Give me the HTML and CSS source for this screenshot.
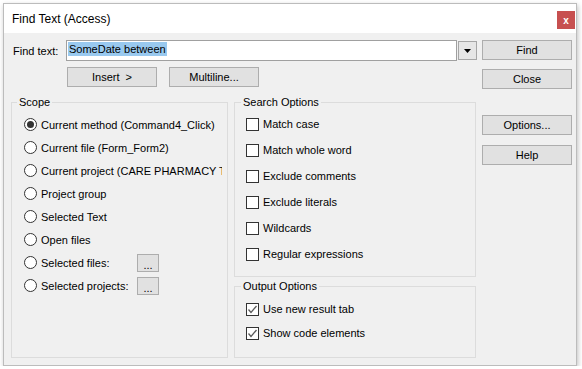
FILE: index.html
```html
<!DOCTYPE html>
<html lang="en">
<head>
  <meta charset="UTF-8"/>
  <title>Find Text (Access)</title>
  <link rel="stylesheet" href="styles.css">
</head>
<body>

  <div class="window">
    <!-- Title bar -->
    <div class="titlebar">
      <span class="title">Find Text (Access)</span>
      <span class="close-x">x</span>
    </div>

    <div class="dialog">
      <div class="main">
        <!-- Find text row -->
        <div class="find-row">
          <label class="find-label">Find text:</label>
          <div class="combo-input"><span class="sel">SomeDate between</span></div>
          <div class="combo-arrow">
            <svg width="7" height="4" viewBox="0 0 7 4"><path d="M0 0H7L3.5 4Z" fill="#000"/></svg>
          </div>
        </div>

        <div class="insert-row">
          <button class="btn">Insert &nbsp;&gt;</button>
          <button class="btn">Multiline...</button>
        </div>

        <div class="groups">
          <!-- Scope -->
          <fieldset class="group scope">
            <legend>Scope</legend>
            <div class="opt-list">
              <div class="opt"><span class="radio on"></span><span>Current method (Command4_Click)</span></div>
              <div class="opt"><span class="radio"></span><span>Current file (Form_Form2)</span></div>
              <div class="opt"><span class="radio"></span><span>Current project (CARE PHARMACY TRADING)</span></div>
              <div class="opt"><span class="radio"></span><span>Project group</span></div>
              <div class="opt"><span class="radio"></span><span>Selected Text</span></div>
              <div class="opt"><span class="radio"></span><span>Open files</span></div>
              <div class="opt"><span class="radio"></span><span class="opt-fixed">Selected files:</span><button class="btn btn-dots">...</button></div>
              <div class="opt"><span class="radio"></span><span class="opt-fixed">Selected projects:</span><button class="btn btn-dots">...</button></div>
            </div>
          </fieldset>

          <div class="group-col">
            <!-- Search Options -->
            <fieldset class="group search">
              <legend>Search Options</legend>
              <div class="check-list">
                <div class="chk"><span class="check"></span><span>Match case</span></div>
                <div class="chk"><span class="check"></span><span>Match whole word</span></div>
                <div class="chk"><span class="check"></span><span>Exclude comments</span></div>
                <div class="chk"><span class="check"></span><span>Exclude literals</span></div>
                <div class="chk"><span class="check"></span><span>Wildcards</span></div>
                <div class="chk"><span class="check"></span><span>Regular expressions</span></div>
              </div>
            </fieldset>

            <!-- Output Options -->
            <fieldset class="group output">
              <legend>Output Options</legend>
              <div class="check-list out">
                <div class="chk"><span class="check"><svg width="11" height="11" viewBox="0 0 11 11"><path d="M1.5 5.5L4 8.5L9.5 2" fill="none" stroke="#5a5a5a" stroke-width="1.3"/></svg></span><span>Use new result tab</span></div>
                <div class="chk"><span class="check"><svg width="11" height="11" viewBox="0 0 11 11"><path d="M1.5 5.5L4 8.5L9.5 2" fill="none" stroke="#5a5a5a" stroke-width="1.3"/></svg></span><span>Show code elements</span></div>
              </div>
            </fieldset>
          </div>
        </div>
      </div>

      <!-- Command buttons -->
      <div class="side">
        <button class="btn">Find</button>
        <button class="btn btn-close">Close</button>
        <button class="btn btn-options">Options...</button>
        <button class="btn btn-help">Help</button>
      </div>
    </div>
  </div>

</body>
</html>
```

FILE: styles.css
```css
:root {
  --face: #f0f0f0;
  --btn-face: #e1e1e1;
  --btn-border: #adadad;
  --group-border: #dcdcdc;
  --box-border: #333;
}
* { box-sizing:border-box }
html, body { margin:0; padding:0; background:#fff }
body {
  font-family: "Liberation Sans", Arial, sans-serif;
  font-size: 11px;
  color: #000;
}

/* Window frame */
.window {
  width:574px; height:363px;
  margin:3px 0 0 3px;
  border:1px solid #bcbcbc;
  box-shadow: 1px 2px 5px rgba(0,0,0,0.25);
  display:flex; flex-direction:column;
}
.titlebar {
  height:29px; flex:none;
  background:#fff;
  display:flex; align-items:center;
  padding:0 1px 0 8px;
}
.title { font-size:12px }
.close-x {
  margin-left:auto; align-self:flex-start; margin-top:7px;
  width:18px; height:18px;
  background:#c75050; color:#fff;
  font-weight:bold; font-size:10px;
  display:flex; align-items:center; justify-content:center;
}

/* Dialog body */
.dialog {
  flex:1;
  background: var(--face);
  display:flex;
  padding:7px 4px 0 7px;
}
.main { width:466px }
.side {
  width:90px; margin-left:5px;
  display:flex; flex-direction:column;
}

.btn {
  width:90px; height:20px;
  background: var(--btn-face);
  border:1px solid var(--btn-border);
  font: inherit; color:#000;
  padding:0;
}
.btn-close   { margin-top:9px }
.btn-options { margin-top:26px }
.btn-help    { margin-top:10px }

/* Find row */
.find-row { display:flex; align-items:center; height:21px }
.find-label { width:55px; padding-left:2px }
.combo-input {
  width:391px; height:21px;
  border:1px solid #a0a0a0; background:#fff;
  padding:2px 0 0 1px;
}
.sel { background:#99c9ef; padding:1px 1px; }
.combo-arrow {
  width:19px; height:19px; margin-left:1px;
  border:1px solid #a6a6a6; background:#e6e6e6;
  display:flex; align-items:center; justify-content:center;
}

.insert-row {
  display:flex; gap:12px;
  margin-top:6px; padding-left:56px;
}

/* Group boxes */
.groups { display:flex; gap:6px; margin-top:9px }
.group-col { display:flex; flex-direction:column; gap:3px; width:242px }
.group {
  margin:0; min-width:0;
  border:1px solid var(--group-border);
  padding:0 5px;
}
.group legend { padding:0 2px; line-height:13px }
.scope  { width:217px; height:262px }
.search { height:181px; padding-left:6px }
.output { height:78px; padding-left:6px }

.opt-list { padding:4px 0 0 7px }
.opt {
  height:23px;
  display:flex; align-items:center;
  white-space:nowrap; overflow:hidden;
}
.radio {
  width:13px; height:13px; flex:none;
  border:1px solid var(--box-border); border-radius:50%;
  background:#fff; margin-right:4px;
  display:flex; align-items:center; justify-content:center;
}
.radio.on::after {
  content:''; width:7px; height:7px;
  border-radius:50%; background:#333;
}
.opt-fixed { width:96px; flex:none }
.btn-dots { width:22px; height:18px; flex:none; line-height:20px }

.check-list { padding:2px 0 0 5px }
.check-list.out { padding-top:4px }
.chk { height:26px; display:flex; align-items:center; white-space:nowrap }
.out .chk { height:24px }
.check {
  width:13px; height:13px; flex:none;
  border:1px solid var(--box-border); background:#fff;
  margin-right:4px;
  display:flex; align-items:center; justify-content:center;
}
.check svg { display:block }
```
